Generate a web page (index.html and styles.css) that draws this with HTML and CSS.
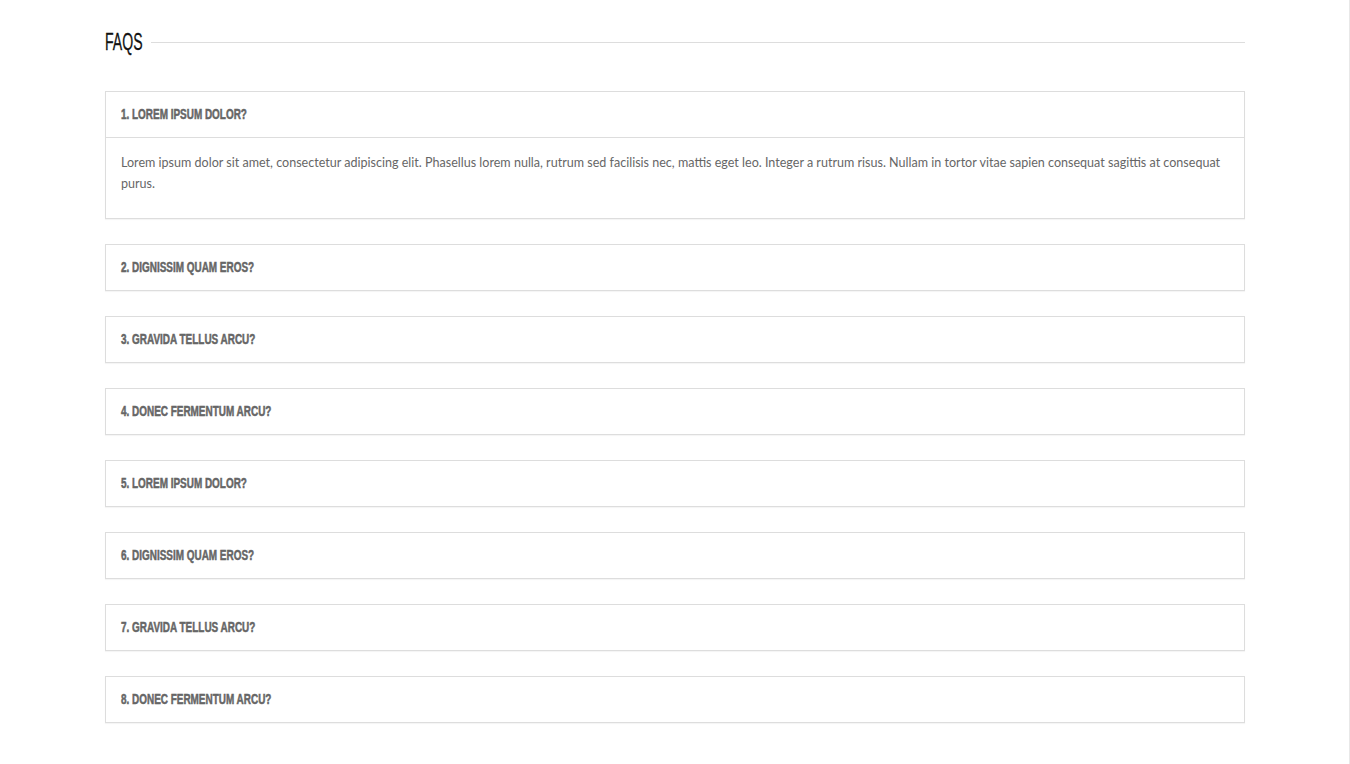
FILE: index.html
```html
<!DOCTYPE html>
<html lang="en">

<head>
    <meta charset="UTF-8">
    <meta name="viewport" content="width=device-width, initial-scale=1.0">
    <title>FAQs</title>
    <link rel="stylesheet" href="styles.css">
</head>

<body>
    <div class="faq-container">
        <div class="faq-title">
            <h2><span>FAQS</span></h2>
            <span class="faq-title-line"></span>
        </div>

        <div class="faq-item open">
            <div class="faq-question"><span>1. Lorem ipsum dolor?</span></div>
            <div class="faq-answer">
                <p>Lorem ipsum dolor sit amet, consectetur adipiscing elit. Phasellus lorem nulla, rutrum sed facilisis nec, mattis eget leo. Integer a rutrum risus. Nullam in tortor vitae sapien consequat sagittis at consequat purus.</p>
            </div>
        </div>

        <div class="faq-item">
            <div class="faq-question"><span>2. Dignissim quam eros?</span></div>
        </div>

        <div class="faq-item">
            <div class="faq-question"><span>3. Gravida tellus arcu?</span></div>
        </div>

        <div class="faq-item">
            <div class="faq-question"><span>4. Donec fermentum arcu?</span></div>
        </div>

        <div class="faq-item">
            <div class="faq-question"><span>5. Lorem ipsum dolor?</span></div>
        </div>

        <div class="faq-item">
            <div class="faq-question"><span>6. Dignissim quam eros?</span></div>
        </div>

        <div class="faq-item">
            <div class="faq-question"><span>7. Gravida tellus arcu?</span></div>
        </div>

        <div class="faq-item">
            <div class="faq-question"><span>8. Donec fermentum arcu?</span></div>
        </div>
    </div>
</body>

</html>
```

FILE: styles.css
```css
* {
    margin: 0;
    padding: 0;
    box-sizing: border-box;
}

body {
    font-family: 'Lato', 'Open Sans', sans-serif;
    background-color: #fff;
    color: #666;
    min-height: 764px;
    position: relative;
}

/* page edge on the right */
body::after {
    content: '';
    position: absolute;
    top: 0;
    bottom: 0;
    right: 0;
    width: 1px;
    background: #e8e8e8;
}

.faq-container {
    width: 1140px;
    margin: 0 auto;
    padding: 29px 0 40px;
}

.faq-title {
    display: flex;
    align-items: center;
    gap: 10px;
    margin-bottom: 36px;
}

.faq-title h2 {
    width: 36px;
    flex-shrink: 0;
    font-family: 'Liberation Sans', sans-serif;
    font-weight: normal;
    font-size: 23.5px;
    line-height: 26px;
    color: #111;
    white-space: nowrap;
}

.faq-title h2 span {
    display: inline-block;
    transform: scaleX(0.6);
    transform-origin: left center;
    -webkit-text-stroke: 0.3px #111;
}

.faq-title-line {
    flex: 1;
    height: 1px;
    background: #ddd;
}

.faq-item {
    border: 1px solid #ddd;
    background: #fff;
    box-shadow: 0 1px 1px rgba(0, 0, 0, 0.04);
    margin-bottom: 25px;
}

.faq-question {
    font-family: 'Liberation Sans', sans-serif;
    font-weight: bold;
    font-size: 14px;
    line-height: 20px;
    text-transform: uppercase;
    color: #666;
    padding: 12px 15px 13px;
    white-space: nowrap;
}

.faq-question span {
    display: inline-block;
    transform: scaleX(0.71);
    transform-origin: left center;
    -webkit-text-stroke: 0.5px #666;
}

.faq-item.open .faq-question {
    border-bottom: 1px solid #ddd;
}

.faq-answer {
    padding: 14px 15px 24px;
}

.faq-answer p {
    font-size: 12.55px;
    line-height: 21px;
    color: #666;
}
```
